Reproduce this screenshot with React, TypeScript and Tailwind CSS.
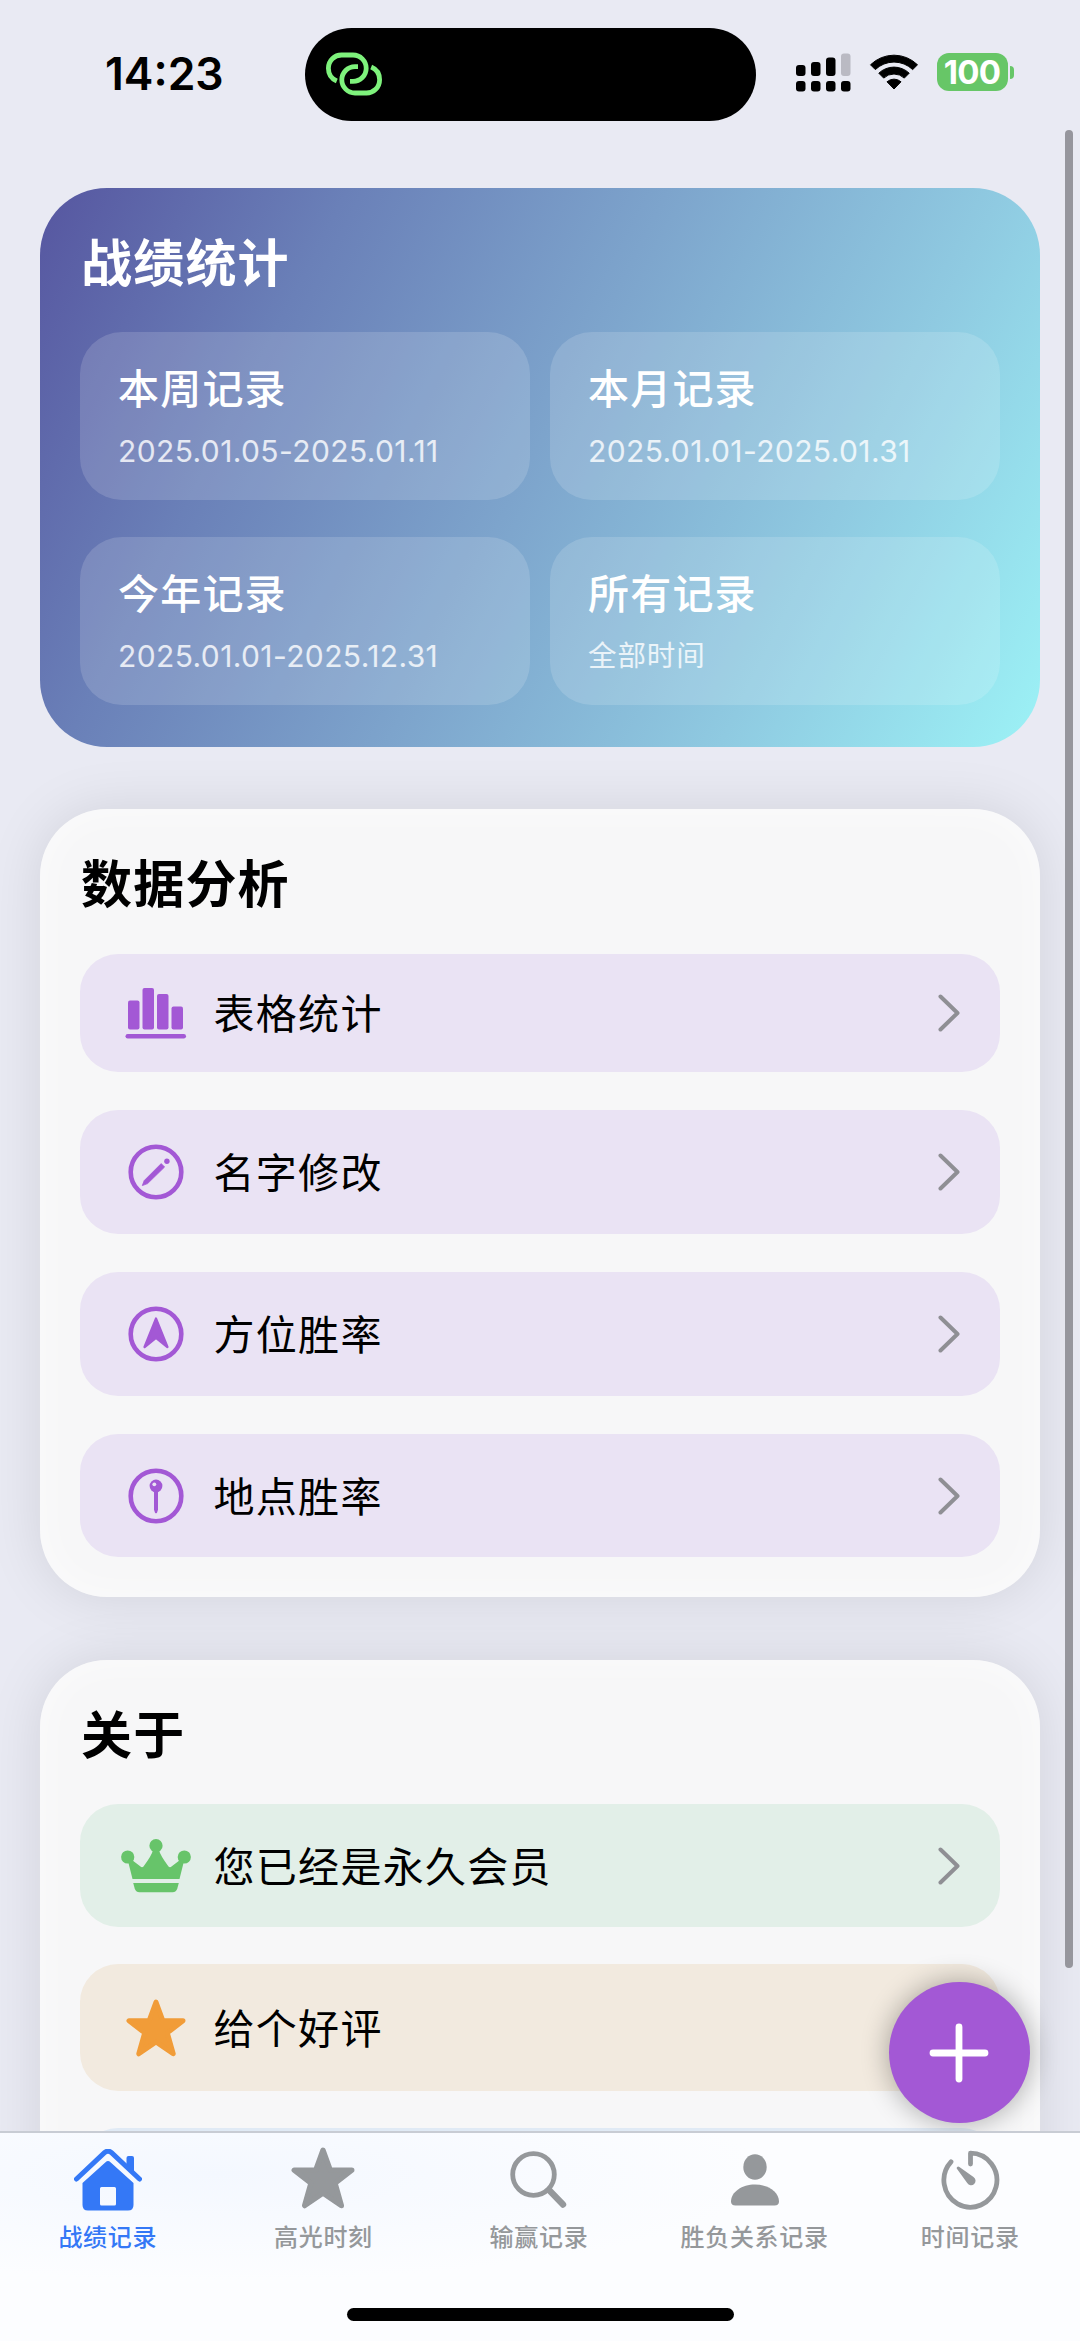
import React from 'react';

const CJK = "font-['Inter','Noto_Sans_CJK_SC',sans-serif]";

const records = [
  { title: '本周记录', range: '2025.01.05-2025.01.11', style: 'text-[30px] tracking-[0.4px]' },
  { title: '本月记录', range: '2025.01.01-2025.01.31', style: 'text-[30px] tracking-[0.4px]' },
  { title: '今年记录', range: '2025.01.01-2025.12.31', style: 'text-[30px] tracking-[0.4px]' },
  { title: '所有记录', range: '全部时间', style: 'text-[28.5px] tracking-[0.9px]' },
];

function ChartIcon() {
  return (
    <svg width="62" height="52" viewBox="0 0 62 52" fill="currentColor">
      <rect x="3" y="13.5" width="11.5" height="29" rx="2" />
      <rect x="17.5" y="1" width="11.5" height="41.5" rx="2" />
      <rect x="32" y="7" width="11.5" height="35.5" rx="2" />
      <rect x="46.5" y="19.5" width="11.5" height="23" rx="2" />
      <rect x="0.5" y="47" width="60.5" height="4.4" rx="2.2" />
    </svg>
  );
}

function PencilCircleIcon() {
  return (
    <svg width="56" height="56" viewBox="0 0 56 56" fill="currentColor">
      <circle cx="28" cy="28" r="25.3" fill="none" stroke="currentColor" strokeWidth="4.6" />
      <path d="M14.3 41.6l1.9-5L33.2 19.6l3.4 3.4L19.6 39.6z" stroke="currentColor" strokeWidth="0.8" strokeLinejoin="round" />
      <circle cx="38.9" cy="17.2" r="2.7" />
    </svg>
  );
}

function LocationCircleIcon() {
  return (
    <svg width="56" height="56" viewBox="0 0 56 56" fill="currentColor">
      <circle cx="28" cy="28" r="25.3" fill="none" stroke="currentColor" strokeWidth="4.6" />
      <path
        d="M28 12.6L39.4 41L28 31.8L16.6 41z"
        stroke="currentColor"
        strokeWidth="2.4"
        strokeLinejoin="round"
      />
    </svg>
  );
}

function PinCircleIcon() {
  return (
    <svg width="56" height="56" viewBox="0 0 56 56" fill="currentColor">
      <circle cx="28" cy="28" r="25.3" fill="none" stroke="currentColor" strokeWidth="4.6" />
      <circle cx="28" cy="18" r="6.4" />
      <path d="M26 23h4v18.5l-1 3.3q-1 1-2 0l-1-3.3z" />
      <circle cx="26.3" cy="16.3" r="1.9" className="fill-[#eae3f4]" />
    </svg>
  );
}

function CrownIcon() {
  return (
    <svg width="70" height="54" viewBox="0 0 70 54" fill="currentColor">
      <circle cx="35" cy="6.7" r="6.6" />
      <circle cx="6.7" cy="18" r="6.6" />
      <circle cx="63.3" cy="18" r="6.6" />
      <path d="M32 11h6q1 5 9.500 16.500q1.500 1.500 3 0L59 21l3.500 3L58.500 40h-47L7.500 24l3.500-3l8.500 6.500q1.500 1.500 3 0Q31 16 32 11z" />
      <path d="M12.200 44h45.600l-1.500 5.600q-1 3.700-4.800 3.700h-33q-3.800 0-4.800-3.700z" />
    </svg>
  );
}

function StarIcon({ className }: { className: string }) {
  return (
    <svg className={className} viewBox="0 0 60 58" fill="currentColor" preserveAspectRatio="none">
      <path
        d="M30 3L36.800 21.700H57L41.300 33.900L47.200 54.800L30 43L12.800 54.800L18.700 33.900L3 21.700H23.200z"
        stroke="currentColor"
        strokeWidth="5"
        strokeLinejoin="round"
      />
    </svg>
  );
}

function Chevron() {
  return (
    <svg
      className="mr-[39.5px] ml-auto text-[#8f8f94]"
      width="24"
      height="38"
      viewBox="0 0 24 38"
      fill="none"
      stroke="currentColor"
      strokeWidth="4"
      strokeLinecap="round"
      strokeLinejoin="round"
    >
      <path d="M3.500 2.500L20.500 19L3.500 35.500" />
    </svg>
  );
}

function HomeIcon() {
  return (
    <svg width="68" height="62" viewBox="0 0 68 62" fill="currentColor">
      <path
        d="M2.500 30L30.500 3.700Q34 .6 37.500 3.700L65.500 30"
        fill="none"
        stroke="currentColor"
        strokeWidth="5"
        strokeLinecap="round"
      />
      <path d="M52.500 9q0-2 2-2h3.500q2 0 2 2v17l-7.500-7z" />
      <path
        fillRule="evenodd"
        d="M31.500 13.200q2.500-2.200 5 0L59.500 34v22q0 5.500-5.500 5.500H14q-5.500 0-5.500-5.500V34zM27.500 38q-1.500 0-1.500 1.500V55q0 1.500 1.500 1.500h13q1.500 0 1.500-1.500V39.500q0-1.500-1.500-1.500z"
      />
    </svg>
  );
}

function SearchIcon() {
  return (
    <svg width="57" height="58" viewBox="0 0 57 58" fill="none" stroke="currentColor" strokeLinecap="round">
      <circle cx="23.500" cy="23.500" r="20.800" strokeWidth="4.800" />
      <path d="M39.500 39.500L53 53.500" strokeWidth="6.400" />
    </svg>
  );
}

function PersonIcon() {
  return (
    <svg width="48" height="52" viewBox="0 0 48 52" fill="currentColor">
      <ellipse cx="24" cy="13" rx="11.700" ry="12.800" />
      <path d="M0 47.500C0 38 11 30.500 24 30.500S48 38 48 47.500Q48 51.500 43.500 51.500h-39Q0 51.500 0 47.500z" />
    </svg>
  );
}

function TimerIcon() {
  return (
    <svg width="59" height="60" viewBox="0 0 59 60" fill="none">
      <path
        d="M29.500 14V3.200A26.500 27 0 1 1 10 11.800"
        stroke="currentColor"
        strokeWidth="4.800"
        strokeLinecap="round"
        strokeLinejoin="round"
      />
      <path d="M16 17.200q1-1.200 2.400-.3L32.500 27a4.500 4.500 0 1 1-6.300 6.100L15.900 18.700q-.6-.8.100-1.500z" fill="currentColor" />
    </svg>
  );
}

function LinkIcon() {
  return (
    <svg
      className="ml-5 text-[#7ef27c]"
      width="58"
      height="45"
      viewBox="0 0 58 45"
      fill="none"
      stroke="currentColor"
      strokeWidth="4.800"
    >
      <path d="M11.800 29C6.500 26.800 3.400 22 3.400 16.300C3.400 8.500 9.500 3 16.500 3H28A13.200 13.200 0 0 1 28 29.400H25" />
      <path d="M46.200 15C51.500 17.200 54.600 22 54.600 27.700C54.600 35.500 48.500 41 41.500 41H30A13.200 13.200 0 0 1 30 14.600H33" />
    </svg>
  );
}

function StatusBar() {
  return (
    <header className="flex h-[188px] items-start">
      <div className="mt-[49px] w-[305px] pl-[105px] text-[44.500px] leading-[50px] font-semibold text-black">14:23</div>
      <div className="mt-7 flex h-[93px] w-[451px] items-center rounded-full bg-black">
        <LinkIcon />
      </div>
      <div className="mt-[52px] ml-10 flex items-center">
        <svg width="56" height="40" viewBox="0 0 56 40">
          <rect x="0" y="13" width="9.500" height="11" rx="3" />
          <rect x="15" y="10" width="9.500" height="14" rx="3" />
          <rect x="30" y="5.500" width="9.500" height="18.500" rx="3" />
          <rect x="45" y="1.500" width="9.500" height="22.500" rx="3" fill="#babac3" />
          <rect x="0" y="29" width="9.500" height="10.500" rx="3" />
          <rect x="15" y="29" width="9.500" height="10.500" rx="3" />
          <rect x="30" y="29" width="9.500" height="10.500" rx="3" />
          <rect x="45" y="29" width="9.500" height="10.500" rx="3" />
        </svg>
        <svg className="ml-[17px]" width="50" height="40" viewBox="0 0 50 40">
          <path d="M1.500 12.800a33.500 33.500 0 0 1 47 0l-4.800 4.800a27 27 0 0 0-37.400 0z" stroke="#000" strokeWidth="1" strokeLinejoin="round" />
          <path d="M9.800 21.200a22 22 0 0 1 30.400 0l-4.900 4.900a15 15 0 0 0-20.600 0z" stroke="#000" strokeWidth="1" strokeLinejoin="round" />
          <path d="M18 29.800a10.500 10.500 0 0 1 14 0L25 37z" stroke="#000" strokeWidth="1" strokeLinejoin="round" />
        </svg>
        <div className="ml-[17.500px] flex h-[38px] w-[71px] items-center justify-center rounded-[12px] bg-[#67c667] text-[33px] leading-none font-bold tracking-[-0.800px] text-white">
          100
        </div>
        <div className="ml-[2px] h-[13px] w-[4.500px] rounded-r-full bg-[#67c667]" />
      </div>
    </header>
  );
}

interface RowProps {
  icon: React.ReactNode;
  label: string;
  className: string;
  iconClass: string;
  hideChevron?: boolean;
}

function Row({ icon, label, className, iconClass, hideChevron }: RowProps) {
  return (
    <div className={`flex items-center rounded-[38px] ${className}`}>
      <div className={`ml-[36.500px] flex w-[78px] justify-center ${iconClass}`}>{icon}</div>
      <span className="ml-[19px] pt-[2px] text-[41px] leading-[56px] tracking-[1.300px] text-black">{label}</span>
      {!hideChevron && <Chevron />}
    </div>
  );
}

const tabs = [
  { label: '战绩记录', icon: <HomeIcon />, active: true },
  { label: '高光时刻', icon: <StarIcon className="mb-1 h-[62px] w-[64px]" /> },
  { label: '输赢记录', icon: <SearchIcon /> },
  { label: '胜负关系记录', icon: <PersonIcon /> },
  { label: '时间记录', icon: <TimerIcon /> },
];

export default function App() {
  return (
    <div className={`relative flex h-[2341px] w-[1080px] flex-col overflow-hidden bg-[#e9eaf3] ${CJK}`}>
      <StatusBar />

      <main className="flex min-h-0 flex-1 flex-col px-10">
        <section className="h-[559px] shrink-0 rounded-[67px] bg-[linear-gradient(117deg,#5656a0_0%,#6a80b8_24%,#7da4cc_49%,#8fcae1_75%,#9cf2f6_100%)] px-10 pt-[39px]">
          <h2 className="ml-[1px] text-[51px] leading-[74px] font-bold tracking-[1.200px] text-white">战绩统计</h2>
          <div className="mt-[31px] grid grid-cols-2 gap-x-5 gap-y-[37px]">
            {records.map((r) => (
              <div key={r.title} className="h-[168px] rounded-[42px] bg-white/15 pt-[29px] pl-[38px]">
                <div className="text-[41px] leading-[56px] font-medium tracking-[1.200px] text-white">{r.title}</div>
                <div className={`mt-[14px] leading-[40px] text-white/80 ${r.style}`}>{r.range}</div>
              </div>
            ))}
          </div>
        </section>

        <section className="mt-[62px] h-[788px] shrink-0 rounded-[67px] bg-[#f7f7f8] px-10 pt-[39px] shadow-[0_0_55px_rgba(0,0,0,0.1),inset_0_0_40px_rgba(255,255,255,0.6)]">
          <h2 className="ml-[1px] text-[51px] leading-[74px] font-bold tracking-[1.200px] text-black">数据分析</h2>
          <div className="mt-[32px] flex flex-col gap-[38px]">
            <Row icon={<ChartIcon />} label="表格统计" className="h-[118px] bg-[#eae3f4]" iconClass="text-[#a358d5]" />
            <Row icon={<PencilCircleIcon />} label="名字修改" className="h-[124px] bg-[#eae3f4]" iconClass="text-[#a358d5]" />
            <Row icon={<LocationCircleIcon />} label="方位胜率" className="h-[124px] bg-[#eae3f4]" iconClass="text-[#a358d5]" />
            <Row icon={<PinCircleIcon />} label="地点胜率" className="h-[123px] bg-[#eae3f4]" iconClass="text-[#a358d5]" />
          </div>
        </section>

        <section className="mt-[63px] h-[788px] shrink-0 rounded-[67px] bg-[#f7f7f8] px-10 pt-[39px] shadow-[0_0_55px_rgba(0,0,0,0.1),inset_0_0_40px_rgba(255,255,255,0.6)]">
          <h2 className="ml-[1px] text-[51px] leading-[74px] font-bold tracking-[1.200px] text-black">关于</h2>
          <div className="mt-[31px] flex flex-col gap-[37px]">
            <Row icon={<CrownIcon />} label="您已经是永久会员" className="h-[123px] bg-[#e2efe8]" iconClass="text-[#67c46a]" />
            <Row
              icon={<StarIcon className="h-[58px] w-[60px]" />}
              label="给个好评"
              className="h-[127px] bg-[#f2eadf]"
              iconClass="text-[#f19c38]"
              hideChevron
            />
            <div className="h-[124px] rounded-[38px] bg-[#e0eaf5]" />
          </div>
        </section>
      </main>

      {/* Scroll indicator */}
      <div className="absolute top-[130px] left-[1065px] h-[1838px] w-[7.500px] rounded-full bg-[#96969d]" />

      {/* Add button */}
      <button className="absolute top-[1982px] left-[889px] flex size-[141px] items-center justify-center rounded-full bg-[#a358d5] pr-[2px] shadow-[0_0_28px_rgba(0,0,0,0.33)]">
        <svg width="60" height="60" viewBox="0 0 60 60" stroke="#fff" strokeWidth="6.800" strokeLinecap="round">
          <path d="M30 4V56M4 30H56" />
        </svg>
      </button>

      <nav className="absolute inset-x-0 bottom-0 h-[210px] border-t-2 border-[#c8ccd4] bg-[#fcfdff] bg-[radial-gradient(ellipse_at_20%_20%,#f4f8ff_0%,#fcfdff_45%)]">
        <div className="grid grid-cols-5 pr-[2px]">
          {tabs.map((t) => (
            <div key={t.label} className={`flex flex-col items-center ${t.active ? 'text-[#3478f6]' : 'text-[#95989b]'}`}>
              <div className="mt-[14px] flex h-[66px] items-center justify-center">{t.icon}</div>
              <span className="mt-[9px] text-[24px] leading-[32px] font-medium tracking-[0.700px]">{t.label}</span>
            </div>
          ))}
        </div>
        <div className="absolute top-[175px] left-[347px] h-[13px] w-[387px] rounded-full bg-black" />
      </nav>
    </div>
  );
}
